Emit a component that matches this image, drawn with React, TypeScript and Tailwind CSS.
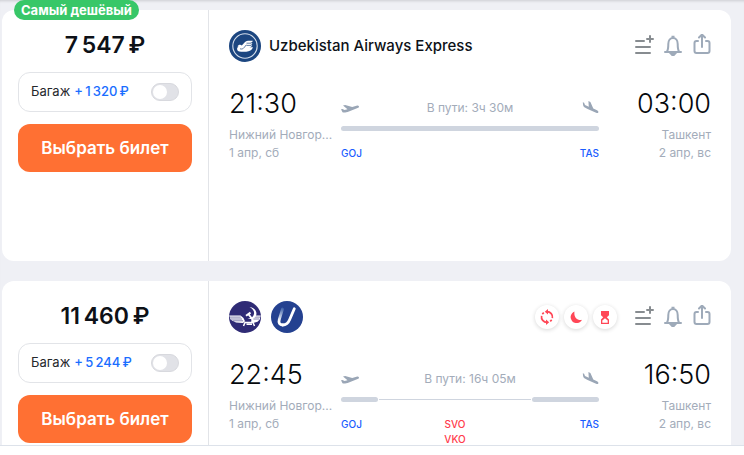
import React from "react";

type Ticket = {
  badge?: string;
  price: string;
  baggage: string;
  airlines: React.ReactNode;
  warnings?: boolean;
  depart: string;
  arrive: string;
  duration: string;
  stops: string[];
};

function UzbekistanLogo() {
  return (
    <svg className="size-8" viewBox="0 0 32 32" role="img" aria-label="Uzbekistan Airways Express">
      <circle cx="16" cy="16" r="16" fill="#1c4680" />
      <circle cx="16" cy="16" r="12.2" fill="none" stroke="#d5deea" strokeWidth="1.1" />
      <path
        d="M8.500 16.500c.6-1.800 3.200-2.300 4.300-1l3-3.200c1.200-1.200 2.600-1.600 4.600-1.600h3.400c-.5 1.500-1.300 2.100-2.700 2.200h2.300c-.5 1.500-1.300 2.100-2.800 2.200h2.600c-.5 1.600-1.400 2.200-3 2.200h3.800c-1.200 2.900-3.400 4.400-6.800 4.400h-5c-2.800 0-4.300-1.300-4.100-3 .1-.9.700-1.500 1.400-1.900-.4-.3-.7-.4-1-.3Z"
        fill="#fff"
      />
      <path d="M11 18.800c1.800.6 3.200 0 4.300-1.400l2-2.600M17.500 13.200h5M17.500 15.400h5" stroke="#1c4680" strokeWidth=".7" fill="none" />
    </svg>
  );
}

function AeroflotLogo() {
  return (
    <svg className="size-8" viewBox="0 0 32 32" role="img" aria-label="Аэрофлот">
      <circle cx="16" cy="16" r="16" fill="#2f2b75" />
      <path d="M.2 14.400h11.300l3 2.600 1.500 3.200-2 1.800-7-.6-3-1.400-2.500-1.500Z" fill="#fff" />
      <path d="M31.800 14.400h-5.300l-3.500 3-1 3.200 2 1.400 4.500-1.200 2-2Z" fill="#fff" />
      <path d="M.4 16.100h11.400M1.500 18h11.500M4 19.800h10M31 16.100h-6M30 18h-6" stroke="#2f2b75" strokeWidth=".6" />
      <path d="m14.500 25 1.500-3.500h8l1.500 3.500M17.500 23.200h5.500" stroke="#fff" strokeWidth="1.500" fill="none" />
      <path d="M20.500 6c4.600.5 7.300 3.600 6.900 7.200-.5 3.800-4.600 6-9 4 3.500.4 6-1.200 6.600-4.200.5-2.800-1.200-5.400-4.500-7Z" fill="#fff" />
      <path d="m17 14.800 4.500-3.200M19.300 13l4.600 6" stroke="#fff" strokeWidth="2" />
    </svg>
  );
}

function UtairLogo() {
  return (
    <svg className="size-8" viewBox="0 0 32 32" role="img" aria-label="Utair">
      <defs>
        <linearGradient id="utair-stroke" x1="12" y1="7" x2="8" y2="20" gradientUnits="userSpaceOnUse">
          <stop stopColor="#3c60a8" />
          <stop offset="1" stopColor="#fff" />
        </linearGradient>
      </defs>
      <circle cx="16" cy="16" r="16" fill="#244190" />
      <path d="M11.500 8 8.300 18.500c-1 3.500.3 5.500 3.400 5.500" fill="none" stroke="url(#utair-stroke)" strokeWidth="2.800" strokeLinecap="round" />
      <path d="M11.700 24c3.200 0 5.600-2 7-5.500L23.300 7.700" fill="none" stroke="#fff" strokeWidth="2.800" strokeLinecap="round" />
    </svg>
  );
}

function TakeoffIcon() {
  return (
    <svg className="h-5 w-[18px]" viewBox="0 0 18 20" fill="#9aa6b6" aria-hidden="true">
      <path d="M0 11.200 1.500 10.900l2 1.100 3-.8L2 7.600 4.200 7l7 2 4.300-1.300c1.200-.3 2.100-.1 2.400.6.300.8-.2 1.300-1.300 1.700L7.900 13.400c-2.600 1-5.200 1.700-6.400.8Z" />
    </svg>
  );
}

function LandingIcon() {
  return (
    <svg className="h-5 w-[18px]" viewBox="0 0 18 20" fill="#9aa6b6" aria-hidden="true">
      <path d="M1.800 4.200 3.100 4.800 4 7.100l3.800 1.700L7.400 3l2 .9 2.900 6.600 3.700 1.800c1.100.5 1.600 1.300 1.300 2.100-.3.700-1.200.7-2.200.3L6.600 11.100C3.900 9.900 2.200 8.700 2.100 7.100Z" />
    </svg>
  );
}

function AddToListIcon() {
  return (
    <svg className="size-6" viewBox="0 0 24 24" fill="none" stroke="#878c90" strokeWidth="2" strokeLinecap="round" aria-hidden="true">
      <path d="M3 7h8M3 13h14M3 19h14M14 5h6M17 2v6" />
    </svg>
  );
}

function BellIcon() {
  return (
    <svg className="size-6" viewBox="0 0 24 24" fill="none" stroke="#9eaab9" strokeWidth="2" aria-hidden="true">
      <path d="M3 18h16M5 17.500c1.300-2 1.300-4 1.300-7.500C6.300 6.500 8.300 4 11 4s4.700 2.500 4.700 6c0 3.500 0 5.500 1.300 7.500" strokeLinecap="round" strokeLinejoin="round" />
      <path d="M9.500 2.800h3M9 19.800h4l-1.200 1.300h-1.600Z" />
    </svg>
  );
}

function ShareIcon() {
  return (
    <svg className="size-6" viewBox="0 0 24 24" fill="none" stroke="#9eaab9" strokeWidth="2" strokeLinecap="round" strokeLinejoin="round" aria-hidden="true">
      <path d="M7 7H5.500a2 2 0 0 0-2 2v8a2 2 0 0 0 2 2h11a2 2 0 0 0 2-2V9a2 2 0 0 0-2-2H15M11 13V1M8 3.500l3-3 3 3" />
    </svg>
  );
}

function Warnings() {
  const circle = "flex size-6 items-center justify-center rounded-full bg-white shadow-[0_1px_4px_rgba(0,0,0,0.16)]";
  return (
    <ul className="flex gap-[5px]">
      <li className={circle} title="Пересадки">
        <svg className="size-4" viewBox="0 0 16 16" fill="none" stroke="#ff4757" strokeWidth="1.700" aria-hidden="true">
          <path d="M8 2.600A5.500 5.500 0 0 1 13.400 9.200M8 13.400A5.500 5.500 0 0 1 2.600 6.800M3.300 5.200 4.800 3.700M12.700 10.800l-1.500 1.500" />
          <path d="M9 0v5.400L5.800 2.700ZM7 10.600V16l3.200-2.700Z" fill="#ff4757" stroke="none" />
        </svg>
      </li>
      <li className={circle} title="Ночной рейс">
        <svg className="size-4" viewBox="0 0 16 16" fill="#ff4757" aria-hidden="true">
          <path d="M6.500 2.500A6 6 0 1 0 14 10.800C9.500 12 5.500 8 6.500 2.500Z" />
        </svg>
      </li>
      <li className={circle} title="Долгая пересадка">
        <svg className="size-4" viewBox="0 0 16 16" aria-hidden="true">
          <path d="M4 2h8v4.200L9.800 8.300 12 10.500V15H4v-4.500l2.200-2.200L4 6.200Z" fill="#ff4757" />
          <path d="m8 9.300 2.700 2.300v2.200H5.300v-2.200Z" fill="#fff" />
        </svg>
      </li>
    </ul>
  );
}

function Place({ time, city, date, end }: { time: string; city: string; date: string; end?: boolean }) {
  return (
    <div className={end ? "w-26 shrink-0 text-right" : "w-26 shrink-0"}>
      <p className="text-[27px] leading-8 font-light text-[#05080c]">{time}</p>
      <p className="mt-[6px] text-xs leading-[18px] whitespace-nowrap text-[#a3acba]">{city}</p>
      <p className="text-xs leading-[18px] text-[#a3acba]">{date}</p>
    </div>
  );
}

function TicketCard({ ticket }: { ticket: Ticket }) {
  const hasStops = ticket.stops.length > 0;
  return (
    <article className="relative flex min-h-[251px] shrink-0 rounded-xl bg-white">
      {ticket.badge && (
        <span className="absolute -top-[10px] left-3 rounded-full bg-[#38c768] px-[7px] text-[13px] leading-5 font-bold text-white">
          {ticket.badge}
        </span>
      )}
      <section className="flex w-[207px] shrink-0 flex-col border-r border-[#e2e4e8] px-4 pt-[19px]">
        <p className="text-center text-[23px] leading-8 font-semibold text-[#0d1117]">{ticket.price}</p>
        <label className="mt-[11px] flex h-10 items-center rounded-xl border border-[#e2e4e8] px-3 text-[13px] text-[#25282c]">
          <span>Багаж</span>
          <span className="ml-1 font-medium text-[#1a6dff]">{ticket.baggage}</span>
          <input
            type="checkbox"
            className="ml-auto h-[18px] w-7 appearance-none rounded-full border border-[#d8d9de] bg-[#e1e2e7] before:block before:size-[14px] before:translate-x-px before:translate-y-px before:rounded-full before:bg-white checked:bg-[#1a6dff] checked:before:translate-x-[11px]"
          />
        </label>
        <button type="button" className="mt-3 h-12 rounded-xl bg-[#ff7033] pt-px text-[17px] font-semibold text-white">
          Выбрать билет
        </button>
      </section>
      <section className="min-w-0 flex-1 px-5 pt-5">
        <header className="flex h-8 items-center">
          <div className="flex items-center gap-[10px]">{ticket.airlines}</div>
          <div className="ml-auto flex items-center">
            {ticket.warnings && <Warnings />}
            <div className="-mr-1 ml-4 flex gap-[5px]">
              <button type="button" aria-label="Добавить в список"><AddToListIcon /></button>
              <button type="button" aria-label="Следить за ценой"><BellIcon /></button>
              <button type="button" aria-label="Поделиться"><ShareIcon /></button>
            </div>
          </div>
        </header>
        <div className="mt-[26px] flex gap-2">
          <Place time={ticket.depart} city="Нижний Новгор..." date="1 апр, сб" />
          <div className="min-w-0 flex-1">
            <div className="mt-[10px] flex items-center justify-between text-xs leading-5 text-[#a3acba]">
              <TakeoffIcon />
              <span>В пути: {ticket.duration}</span>
              <LandingIcon />
            </div>
            <div className="mt-2 flex h-[5px] items-center">
              {hasStops ? (
                <>
                  <span className="h-full w-[37px] rounded-full bg-[#cfd5df]" />
                  <span className="mx-px h-px flex-1 bg-[#cfd5df]" />
                  <span className="h-full w-[67px] rounded-full bg-[#cfd5df]" />
                </>
              ) : (
                <span className="h-full flex-1 rounded-full bg-[#cfd5df]" />
              )}
            </div>
            <div className="mt-[15px] grid grid-cols-[37px_1fr_67px] text-[10px] leading-[15px] font-medium text-[#1a5cff]">
              <span>GOJ</span>
              <span className="text-center text-[#ff3b4b]">
                {ticket.stops.map((stop) => (
                  <span key={stop} className="block">{stop}</span>
                ))}
              </span>
              <span className="text-right">TAS</span>
            </div>
          </div>
          <Place time={ticket.arrive} city="Ташкент" date="2 апр, вс" end />
        </div>
      </section>
    </article>
  );
}

const tickets: Ticket[] = [
  {
    badge: "Самый дешёвый",
    price: "7\u2009547\u2009₽",
    baggage: "+\u20091\u2009320\u2009₽",
    airlines: (
      <>
        <UzbekistanLogo />
        <span className="-ml-[2px] text-[15px] font-medium text-[#0d1117]">Uzbekistan Airways Express</span>
      </>
    ),
    depart: "21:30",
    arrive: "03:00",
    duration: "3ч 30м",
    stops: [],
  },
  {
    price: "11\u2009460\u2009₽",
    baggage: "+\u20095\u2009244\u2009₽",
    airlines: (
      <>
        <AeroflotLogo />
        <UtairLogo />
      </>
    ),
    warnings: true,
    depart: "22:45",
    arrive: "16:50",
    duration: "16ч 05м",
    stops: ["SVO", "VKO"],
  },
];

export default function App() {
  return (
    <div className="flex h-screen flex-col overflow-hidden bg-white font-['Inter','Liberation_Sans',sans-serif]">
      <main className="flex min-h-0 flex-1 flex-col gap-5 overflow-hidden bg-[#eff0f5] pt-[10px] pr-[13px] pl-[2px] shadow-[inset_0_3px_3px_-2px_rgba(0,0,0,0.15)]">
        {tickets.map((ticket) => (
          <TicketCard key={ticket.depart} ticket={ticket} />
        ))}
      </main>
      <footer className="h-[10px] shrink-0 border-t border-[#dde2ea] bg-white" />
    </div>
  );
}
